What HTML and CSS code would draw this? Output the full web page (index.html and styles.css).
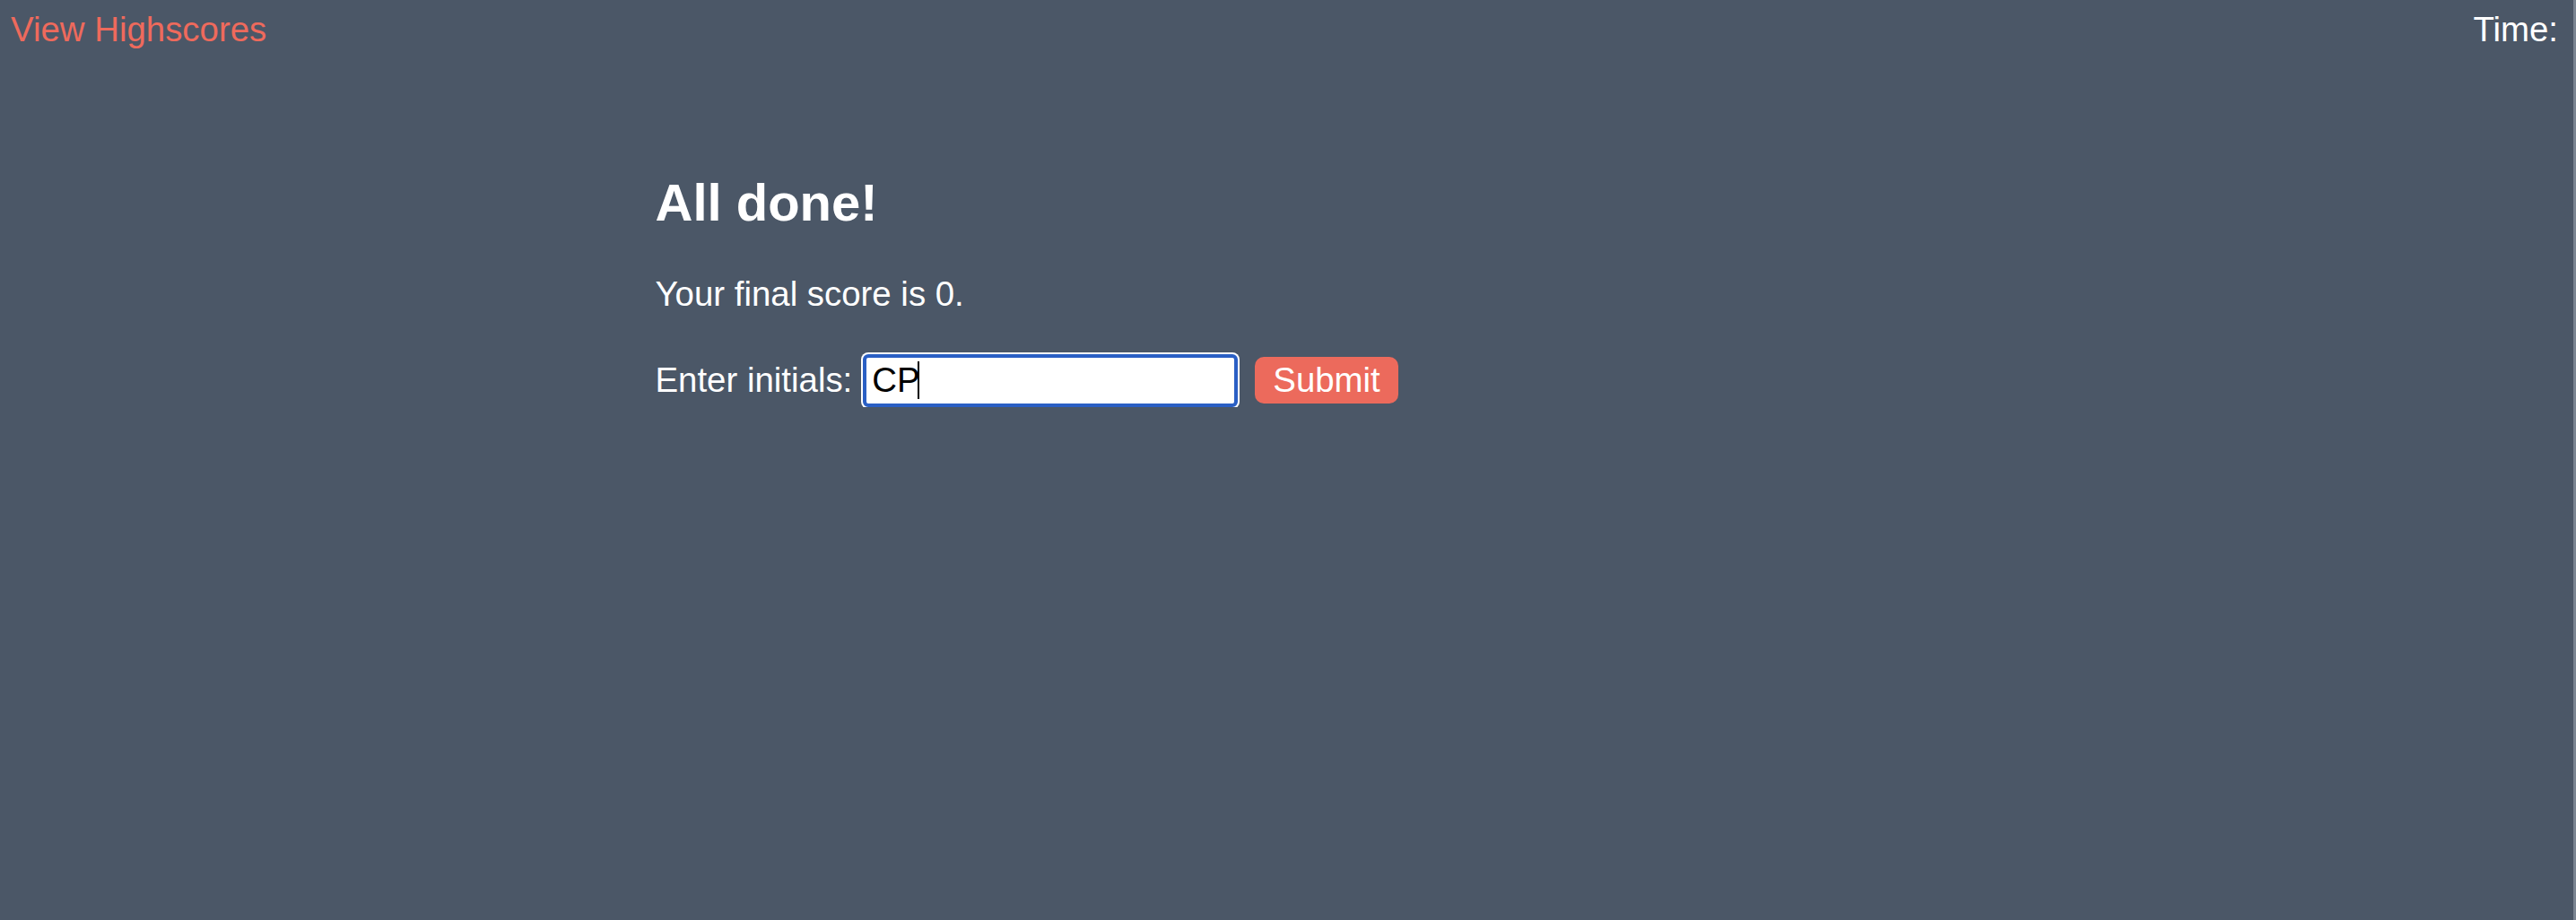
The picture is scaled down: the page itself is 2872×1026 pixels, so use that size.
FILE: index.html
```html
<!DOCTYPE html>
<html lang="en">
<head>
<meta charset="utf-8">
<title>Quiz</title>
<link rel="stylesheet" href="styles.css">
</head>
<body>
<header class="topbar">
  <a class="highscores-link" href="#">View Highscores</a>
  <div class="timer">Time: <span class="time-value"></span></div>
</header>
<main class="content">
  <h2 class="title">All done!</h2>
  <p class="score">Your final score is 0.</p>
  <form class="initials-form">
    <label class="initials-label" for="initials">Enter initials:</label>
    <span class="input-wrap"><input class="initials-input" id="initials" type="text" value="CP"><span class="caret"></span></span>
    <button class="submit-btn" type="button">Submit</button>
  </form>
</main>
</body>
</html>
```

FILE: styles.css
```css
html {
  background: #4b5767;
  border-right: 3px solid #7a8491;
  height: 100%;
  overflow: hidden;
}
body {
  margin: 0;
  font-family: "Liberation Sans", Arial, sans-serif;
  font-size: 38.4px;
  color: #ffffff;
}
.topbar {
  display: flex;
  justify-content: space-between;
  align-items: flex-start;
  padding: 11px 17px 0 12px;
}
.highscores-link {
  color: #ee6a5c;
  text-decoration: none;
}
.timer {
  color: #ffffff;
}
.content {
  width: 1408px;
  margin: 0 auto;
  padding-top: 138px;
}
.title {
  font-size: 58px;
  font-weight: bold;
  margin: 0 0 46px 0;
  line-height: 1.15;
}
.score {
  margin: 0 0 45px 0;
  line-height: 1.15;
}
.initials-form {
  display: flex;
  align-items: center;
}
.initials-label {
  margin-right: 12px;
}
.input-wrap {
  position: relative;
  display: inline-block;
}
.initials-input {
  box-sizing: border-box;
  width: 418px;
  height: 59px;
  font-family: "Liberation Sans", Arial, sans-serif;
  font-size: 38.4px;
  color: #000000;
  background: #ffffff;
  border: 4px solid #2a5fc4;
  border-radius: 6px;
  box-shadow: 0 0 0 2px #ffffff;
  padding: 0 0 0 6px;
  outline: none;
  margin: 0;
}
.caret {
  position: absolute;
  left: 61px;
  top: 8px;
  width: 2px;
  height: 42px;
  background: #000000;
}
.submit-btn {
  margin-left: 19px;
  height: 52px;
  padding: 0 20px;
  font-family: "Liberation Sans", Arial, sans-serif;
  font-size: 38.4px;
  color: #ffffff;
  background: #ec6a5c;
  border: none;
  border-radius: 10px;
}
```
